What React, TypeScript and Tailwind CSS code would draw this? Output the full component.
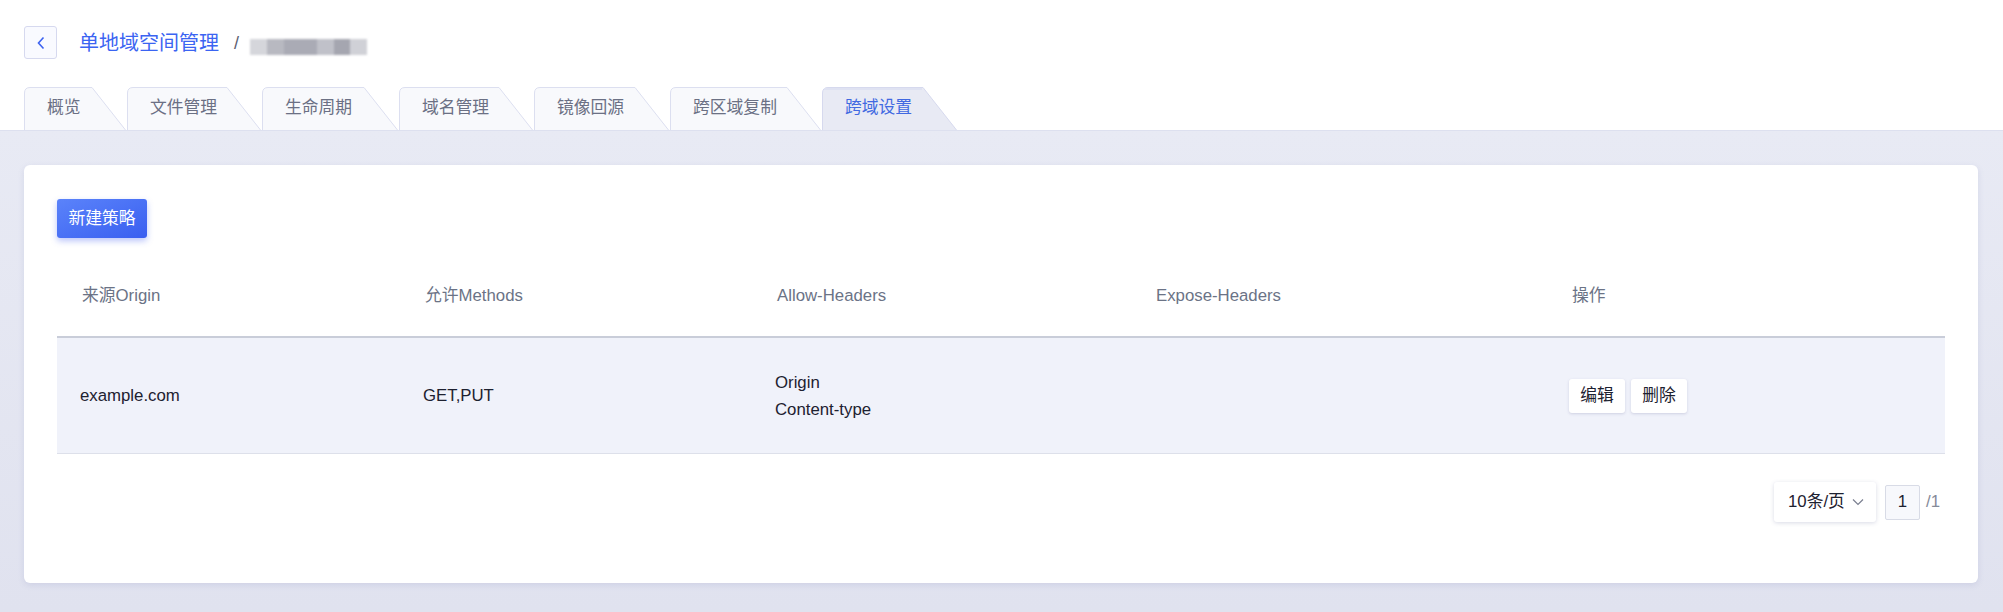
import React from "react";

const FONT = { fontFamily: '"Liberation Sans", "Noto Sans CJK SC", Arial, sans-serif' };

const tabs = [
  { label: "概览", w: 103 },
  { label: "文件管理", w: 135 },
  { label: "生命周期", w: 137 },
  { label: "域名管理", w: 135 },
  { label: "镜像回源", w: 136 },
  { label: "跨区域复制", w: 152 },
  { label: "跨域设置", w: 136, active: true },
];

function Tab({ label, w, active }: { label: string; w: number; active?: boolean }) {
  const d = `M0.5 43 L0.5 6 Q0.5 0.5 6 0.5 L${w - 35} 0.5 L${w - 1.5} 43`;
  return (
    <div className="relative h-[43px] flex items-center pl-[23px]" style={{ width: w }}>
      <svg className="absolute inset-0" width={w} height={43} viewBox={`0 0 ${w} 43`}>
        <path
          d={d}
          fill={active ? "#e8eaf4" : "#f8f9fc"}
          stroke={active ? "#d6d9ee" : "#dcdff0"}
          strokeWidth={1}
        />
        {active && <path d={`M2 2 L${w - 36} 2`} stroke="#dfe2f2" strokeWidth={2} />}
      </svg>
      <span
        className={`relative text-[16.8px] leading-none ${active ? "text-[#4169e1]" : "text-[#6b7084]"}`}
      >
        {label}
      </span>
    </div>
  );
}

const cols = "grid grid-cols-[343px_352px_379px_416px_398px]";

export default function App() {
  return (
    <div className="w-[2003px] h-[612px] flex flex-col overflow-hidden" style={FONT}>
      {/* Header */}
      <div className="bg-white px-[24px] pt-[26px]">
        <div className="flex items-center h-[33px]">
          <button className="w-[33px] h-[33px] border border-[#d6d9ef] bg-[#f9faff] rounded-[3px] flex items-center justify-center">
            <svg width="10" height="14" viewBox="0 0 10 14">
              <polyline points="7.5,1.5 2.5,7 7.5,12.5" fill="none" stroke="#3d63f0" strokeWidth="1.6" />
            </svg>
          </button>
          <span className="ml-[22px] text-[20px] text-[#3b64f2] leading-none">单地域空间管理</span>
          <span className="ml-[15px] text-[18px] text-[#5d6172] leading-none">/</span>
          <div className="ml-[11px] mt-[9px] flex h-[16px] blur-[1.2px]">
            <div className="w-[17px] bg-[#d5d6db]" />
            <div className="w-[17px] bg-[#b8b9c1]" />
            <div className="w-[33px] bg-[#aaabb5]" />
            <div className="w-[17px] bg-[#c0c1c9]" />
            <div className="w-[16px] bg-[#a5a6b0]" />
            <div className="w-[17px] bg-[#d0d1d7]" />
          </div>
        </div>
        <div className="flex items-end mt-[28px]">
          {tabs.map((t) => (
            <Tab key={t.label} {...t} />
          ))}
        </div>
      </div>

      {/* Body */}
      <div className="flex-1 border-t border-[#dde0ef] bg-gradient-to-b from-[#e8eaf4] to-[#e0e2ef] pt-[34px] pl-[24px] pr-[25px]">
        <div className="bg-white rounded-[6px] shadow-[0_2px_6px_rgba(100,110,170,0.15)] px-[33px] pt-[34px] pb-[61px]">
          <button className="w-[90px] h-[39px] rounded-[3px] bg-gradient-to-br from-[#5b83fa] to-[#3a5ef0] shadow-[0_3px_6px_rgba(60,90,240,0.35)] text-white text-[16.8px] flex items-center justify-center">
            新建策略
          </button>

          <div className="mt-[18px]">
            <div className={`${cols} h-[82px] items-center border-b-2 border-[#c9cdd9] text-[16.8px] text-[#6b7386]`}>
              <div className="pl-[25px]">来源Origin</div>
              <div className="pl-[25px]">允许Methods</div>
              <div className="pl-[25px]">Allow-Headers</div>
              <div className="pl-[25px]">Expose-Headers</div>
              <div className="pl-[25px]">操作</div>
            </div>
            <div className={`${cols} h-[116px] items-center bg-[#f0f2fa] border-b border-[#dde0ea] text-[16.8px] text-[#1d2130]`}>
              <div className="pl-[23px]">example.com</div>
              <div className="pl-[23px]">GET,PUT</div>
              <div className="pl-[23px] leading-[27px]">
                <div>Origin</div>
                <div>Content-type</div>
              </div>
              <div />
              <div className="pl-[22px] flex gap-[6px]">
                <button className="w-[56px] h-[34px] bg-white rounded-[3px] shadow-[0_1px_3px_rgba(80,90,140,0.22)] text-[16.8px] text-[#1d2130] flex items-center justify-center">
                  编辑
                </button>
                <button className="w-[56px] h-[34px] bg-white rounded-[3px] shadow-[0_1px_3px_rgba(80,90,140,0.22)] text-[16.8px] text-[#1d2130] flex items-center justify-center">
                  删除
                </button>
              </div>
            </div>
          </div>

          <div className="mt-[28px] flex items-center justify-end pr-[5px]">
            <div className="w-[102px] h-[40px] bg-white rounded-[3px] shadow-[0_1px_4px_rgba(80,90,140,0.22)] flex items-center pl-[14px] text-[16.8px] text-[#1d2130]">
              <span>10条/页</span>
              <svg className="ml-[7px]" width="12" height="8" viewBox="0 0 12 8">
                <polyline points="1,1.5 6,6.5 11,1.5" fill="none" stroke="#7a7f90" strokeWidth="1.2" />
              </svg>
            </div>
            <div className="ml-[9px] w-[35px] h-[35px] bg-[#f7f8fc] border border-[#d8dbe6] rounded-[2px] flex items-center justify-center text-[16.8px] text-[#1d2130]">
              1
            </div>
            <span className="ml-[6px] text-[16.8px] text-[#858a99]">/1</span>
          </div>
        </div>
      </div>
    </div>
  );
}
